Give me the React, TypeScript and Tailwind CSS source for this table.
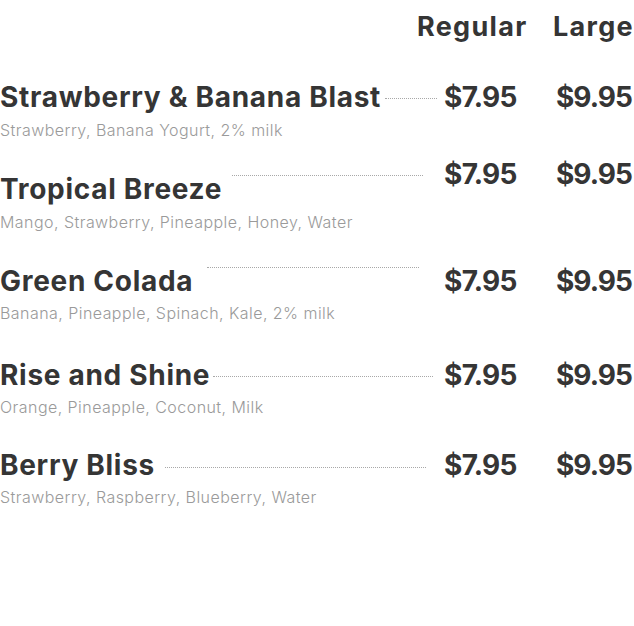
import React from "react";

type Item = {
  name: string;
  desc: string;
  rowMt: string;
  nameMt: string;
  nameW: string;
  dots: string;
  descMt: string;
};

const items: Item[] = [
  { name: "Strawberry & Banana Blast", desc: "Strawberry, Banana Yogurt, 2% milk", rowMt: "mt-[33px]", nameMt: "mt-0", nameW: "w-[385px]", dots: "mr-[7px] mt-[19px]", descMt: "mt-[4px]" },
  { name: "Tropical Breeze", desc: "Mango, Strawberry, Pineapple, Honey, Water", rowMt: "mt-[15px]", nameMt: "mt-[15px]", nameW: "w-[232px]", dots: "mr-[21px] mt-[19px]", descMt: "mt-[4px]" },
  { name: "Green Colada", desc: "Banana, Pineapple, Spinach, Kale, 2% milk", rowMt: "mt-[30px]", nameMt: "mt-0", nameW: "w-[207px]", dots: "mr-[25px] mt-[4px]", descMt: "mt-[3px]" },
  { name: "Rise and Shine", desc: "Orange, Pineapple, Coconut, Milk", rowMt: "mt-[33px]", nameMt: "mt-0", nameW: "w-[213px]", dots: "mr-[11px] mt-[19px]", descMt: "mt-[3px]" },
  { name: "Berry Bliss", desc: "Strawberry, Raspberry, Blueberry, Water", rowMt: "mt-[29px]", nameMt: "mt-0", nameW: "w-[165px]", dots: "mr-[18px] mt-[20px]", descMt: "mt-[3px]" },
];

export default function App() {
  return (
    <div className="w-[634px] h-[626px] bg-white overflow-hidden" style={{ fontFamily: "Inter, 'Noto Sans', sans-serif" }}>
      <div className="flex justify-end pt-[8px] text-[#353535] font-bold text-[27px] leading-[38px] tracking-[1.3px]">
        <div className="w-[136px]">Regular</div>
        <div className="w-[81px]">Large</div>
      </div>
      {items.map((it) => (
        <div key={it.name} className={it.rowMt}>
          <div className="flex items-start">
            <div className={`${it.nameW} shrink-0 ${it.nameMt} text-[28px] leading-[36px] font-bold text-[#353535] whitespace-nowrap tracking-[0.7px]`}>
              {it.name}
            </div>
            <div className={`flex-1 border-b border-dotted border-[#a8a8a8] ${it.dots}`} />
            <div className="flex shrink-0 text-[28px] leading-[36px] font-bold text-[#353535] tracking-[-0.7px] whitespace-nowrap">
              <div className="w-[112px]">$7.95</div>
              <div className="w-[78px] tracking-[-1px]">$9.95</div>
            </div>
          </div>
          <div className={`${it.descMt} text-[16px] leading-[22px] font-light text-[#9a9a9a] tracking-[0.45px] whitespace-nowrap`}>
            {it.desc}
          </div>
        </div>
      ))}
    </div>
  );
}
